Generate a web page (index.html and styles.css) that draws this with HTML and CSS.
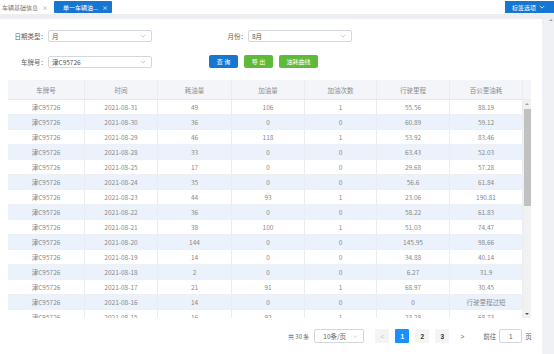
FILE: index.html
```html
<!DOCTYPE html>
<html lang="zh-CN">
<head>
<meta charset="utf-8">
<title>单一车辆油耗</title>
<link rel="stylesheet" href="styles.css">
</head>
<body>
<div class="tabbar">
  <div class="tabs">
    <div class="tab">车辆基础信息<span class="x">×</span></div>
    <div class="tab active">单一车辆油...<span class="x">×</span></div>
  </div>
  <div class="tag-btn">标签选项<svg class="chev" viewBox="0 0 8 5" width="6" height="4"><polyline points="1,1 4,4 7,1" fill="none" stroke="#fff" stroke-width="1"/></svg></div>
</div>
<div class="band"></div>
<div class="main">
  <div class="content">
    <div class="frow first">
      <label class="lbl">日期类型：</label>
      <div class="sel">月<svg class="arrow" viewBox="0 0 8 5" width="6" height="4"><polyline points="1,1 4,4 7,1" fill="none" stroke="#b8bcc4" stroke-width="1"/></svg></div>
      <label class="lbl wide">月份：</label>
      <div class="sel">8月<svg class="arrow" viewBox="0 0 8 5" width="6" height="4"><polyline points="1,1 4,4 7,1" fill="none" stroke="#b8bcc4" stroke-width="1"/></svg></div>
    </div>
    <div class="frow second">
      <label class="lbl">车牌号：</label>
      <div class="sel">津C95726<svg class="arrow" viewBox="0 0 8 5" width="6" height="4"><polyline points="1,1 4,4 7,1" fill="none" stroke="#b8bcc4" stroke-width="1"/></svg></div>
      <div class="btns">
        <button class="btn blue">查 询</button>
        <button class="btn green">导 出</button>
        <button class="btn green w2">油耗曲线</button>
      </div>
    </div>

    <div class="table">
      <div class="thead">
        <div class="c c1">车牌号</div><div class="c c2">时间</div><div class="c c3">耗油量</div><div class="c c4">加油量</div><div class="c c5">加油次数</div><div class="c c6">行驶里程</div><div class="c c7">百公里油耗</div><div class="gutter"></div>
      </div>
      <div class="tbody">
        <div class="rows">
          <div class="r"><div class="c c1">津C95726</div><div class="c c2">2021-08-31</div><div class="c c3">49</div><div class="c c4">106</div><div class="c c5">1</div><div class="c c6">55.56</div><div class="c c7">88.19</div></div>
          <div class="r"><div class="c c1">津C95726</div><div class="c c2">2021-08-30</div><div class="c c3">36</div><div class="c c4">0</div><div class="c c5">0</div><div class="c c6">60.89</div><div class="c c7">59.12</div></div>
          <div class="r"><div class="c c1">津C95726</div><div class="c c2">2021-08-29</div><div class="c c3">46</div><div class="c c4">118</div><div class="c c5">1</div><div class="c c6">53.92</div><div class="c c7">83.46</div></div>
          <div class="r"><div class="c c1">津C95726</div><div class="c c2">2021-08-28</div><div class="c c3">33</div><div class="c c4">0</div><div class="c c5">0</div><div class="c c6">63.43</div><div class="c c7">52.03</div></div>
          <div class="r"><div class="c c1">津C95726</div><div class="c c2">2021-08-25</div><div class="c c3">17</div><div class="c c4">0</div><div class="c c5">0</div><div class="c c6">29.68</div><div class="c c7">57.28</div></div>
          <div class="r"><div class="c c1">津C95726</div><div class="c c2">2021-08-24</div><div class="c c3">35</div><div class="c c4">0</div><div class="c c5">0</div><div class="c c6">56.6</div><div class="c c7">61.84</div></div>
          <div class="r"><div class="c c1">津C95726</div><div class="c c2">2021-08-23</div><div class="c c3">44</div><div class="c c4">93</div><div class="c c5">1</div><div class="c c6">23.06</div><div class="c c7">190.81</div></div>
          <div class="r"><div class="c c1">津C95726</div><div class="c c2">2021-08-22</div><div class="c c3">36</div><div class="c c4">0</div><div class="c c5">0</div><div class="c c6">58.22</div><div class="c c7">61.83</div></div>
          <div class="r"><div class="c c1">津C95726</div><div class="c c2">2021-08-21</div><div class="c c3">38</div><div class="c c4">100</div><div class="c c5">1</div><div class="c c6">51.03</div><div class="c c7">74.47</div></div>
          <div class="r"><div class="c c1">津C95726</div><div class="c c2">2021-08-20</div><div class="c c3">144</div><div class="c c4">0</div><div class="c c5">0</div><div class="c c6">145.95</div><div class="c c7">98.66</div></div>
          <div class="r"><div class="c c1">津C95726</div><div class="c c2">2021-08-19</div><div class="c c3">14</div><div class="c c4">0</div><div class="c c5">0</div><div class="c c6">34.88</div><div class="c c7">40.14</div></div>
          <div class="r"><div class="c c1">津C95726</div><div class="c c2">2021-08-18</div><div class="c c3">2</div><div class="c c4">0</div><div class="c c5">0</div><div class="c c6">6.27</div><div class="c c7">31.9</div></div>
          <div class="r"><div class="c c1">津C95726</div><div class="c c2">2021-08-17</div><div class="c c3">21</div><div class="c c4">91</div><div class="c c5">1</div><div class="c c6">68.97</div><div class="c c7">30.45</div></div>
          <div class="r"><div class="c c1">津C95726</div><div class="c c2">2021-08-16</div><div class="c c3">14</div><div class="c c4">0</div><div class="c c5">0</div><div class="c c6">0</div><div class="c c7">行驶里程过短</div></div>
          <div class="r"><div class="c c1">津C95726</div><div class="c c2">2021-08-15</div><div class="c c3">16</div><div class="c c4">92</div><div class="c c5">1</div><div class="c c6">23.28</div><div class="c c7">68.73</div></div>
        </div>
        <div class="scroll">
          <div class="sarrow up"></div>
          <div class="thumb"></div>
          <div class="sfill"></div>
          <div class="sarrow down"></div>
        </div>
      </div>
    </div>

    <div class="pager">
      <span class="total">共 30 条</span>
      <div class="psel">10条/页<svg class="arrow" viewBox="0 0 8 5" width="5" height="3"><polyline points="1,1 4,4 7,1" fill="none" stroke="#b8bcc4" stroke-width="1"/></svg></div>
      <div class="pbtn prev">&lt;</div>
      <div class="pbtn on">1</div>
      <div class="pbtn">2</div>
      <div class="pbtn">3</div>
      <div class="pbtn next">&gt;</div>
      <span class="goto">前往</span>
      <div class="pinput">1</div>
      <span class="page">页</span>
    </div>
  </div>
  <div class="side"><div class="side-arrow"></div></div>
</div>
</body>
</html>
```

FILE: styles.css
```css
* { box-sizing: border-box; }
html, body { margin: 0; padding: 0; }
body {
  width: 554px;
  height: 354px;
  overflow: hidden;
  background: #fff;
  font-family: "Noto Sans CJK SC", "Noto Sans", "Liberation Sans", sans-serif;
  font-size: 6.5px;
  color: #606266;
}

/* tab bar */
.tabbar {
  height: 14px;
  display: flex;
  justify-content: space-between;
  align-items: flex-start;
}
.tabs { display: flex; align-items: center; height: 14px; }
.tab {
  font-size: 6px;
  color: #7a7a7a;
  padding-left: 2px;
  display: flex;
  align-items: center;
  white-space: nowrap;
}
.tab .x { margin-left: 4px; font-size: 6px; color: #999; }
.tab.active {
  margin-left: 6px;
  width: 58px;
  height: 12px;
  background: #1677d2;
  color: #fff;
  padding: 0 4px 0 9px;
  justify-content: space-between;
  border-radius: 1px;
}
.tab.active .x { color: #fff; }
.tag-btn {
  margin-top: 1px;
  width: 49px;
  height: 12px;
  background: #1677d2;
  color: #fff;
  font-size: 6px;
  display: flex;
  align-items: center;
  padding-left: 7px;
  gap: 3px;
}
.band { height: 5px; background: #eceef1; }

/* main area */
.main { display: flex; height: 335px; }
.content { width: 542px; }
.side { flex: 1; background: #eff1f4; position: relative; }
.side-arrow {
  position: absolute;
  right: 1px;
  top: 0;
  width: 0; height: 0;
  border-left: 2px solid transparent;
  border-right: 2px solid transparent;
  border-bottom: 2px solid #a0a0a0;
}

/* filters */
.frow { display: flex; align-items: center; }
.frow.first { margin-top: 11px; }
.frow.second { margin-top: 13px; }
.lbl {
  width: 48px;
  text-align: right;
  padding-right: 1px;
  color: #606266;
  white-space: nowrap;
}
.lbl.wide { width: 96px; }
.sel {
  width: 104px;
  height: 12px;
  border: 1px solid #d4d7de;
  border-radius: 2px;
  padding-left: 3px;
  display: flex;
  align-items: center;
  justify-content: space-between;
  padding-right: 5px;
  color: #555;
}
.btns { display: flex; gap: 6px; margin-left: 57px; }
.btn {
  width: 29px;
  height: 13px;
  border: 0;
  border-radius: 2px;
  padding: 0;
  font-family: inherit;
  font-size: 6px;
  color: #fff;
  display: flex;
  align-items: center;
  justify-content: center;
}
.btn.blue { background: #1677d2; }
.btn.green { background: #5fba3c; }
.btn.w2 { width: 39px; }

/* table */
.table { margin: 12px 0 0 8px; width: 523px; }
.thead {
  display: flex;
  height: 20px;
  background: #f3f5f8;
  color: #8a8d93;
  border-bottom: 1px solid #e6e9ee;
}
.c {
  display: flex;
  align-items: center;
  justify-content: center;
  border-right: 1px solid #e9ecf1;
  white-space: nowrap;
}
.c1 { width: 77px; }
.c2 { width: 73px; }
.c3 { width: 74px; }
.c4 { width: 73px; }
.c5 { width: 72px; }
.c6 { width: 73px; }
.c7 { width: 73px; }
.gutter { width: 8px; }
.tbody { display: flex; height: 218px; overflow: hidden; }
.rows { width: 515px; }
.r {
  display: flex;
  height: 15px;
  color: #888b90;
  border-bottom: 1px solid #edf0f4;
}
.r:nth-child(even) { background: #ebf2fb; }
.scroll {
  width: 8px;
  background: #f1f1f1;
  display: flex;
  flex-direction: column;
  align-items: center;
}
.sarrow { width: 0; height: 0; border-left: 2px solid transparent; border-right: 2px solid transparent; }
.sarrow.up { margin: 3px 0 4px; border-bottom: 2px solid #a3a3a3; }
.sarrow.down { margin: 3px 0 3px; border-top: 2px solid #505050; }
.thumb { width: 7px; height: 97px; background: #c1c1c1; }
.sfill { flex: 1; }

/* pager */
.pager {
  margin-top: 11px;
  padding-left: 288px;
  height: 14px;
  display: flex;
  align-items: center;
  white-space: nowrap;
}
.total { font-size: 6px; color: #606266; flex: none; }
.psel {
  margin-left: 5px;
  width: 50px;
  height: 14px;
  border: 1px solid #d4d7de;
  border-radius: 2px;
  display: flex;
  align-items: center;
  justify-content: space-between;
  padding: 0 5px 0 8px;
  color: #606266;
  flex: none;
}
.pbtn {
  width: 14px;
  height: 14px;
  margin-left: 6px;
  background: #f4f4f5;
  border-radius: 1px;
  display: flex;
  align-items: center;
  justify-content: center;
  color: #303133;
  font-family: "Liberation Sans", sans-serif;
  font-weight: bold;
  font-size: 6.5px;
  flex: none;
}
.pbtn.prev { margin-left: 11px; color: #c0c4cc; font-weight: normal; }
.pbtn.next { color: #606266; font-weight: normal; background: #fff; }
.pbtn.on { background: #1890ff; color: #fff; }
.goto { margin-left: 14px; flex: none; }
.pinput {
  margin-left: 3px;
  width: 23px;
  height: 14px;
  border: 1px solid #d4d7de;
  border-radius: 2px;
  display: flex;
  align-items: center;
  justify-content: center;
  color: #606266;
  font-family: "Liberation Sans", sans-serif;
  flex: none;
}
.page { margin-left: 3px; flex: none; }
```
